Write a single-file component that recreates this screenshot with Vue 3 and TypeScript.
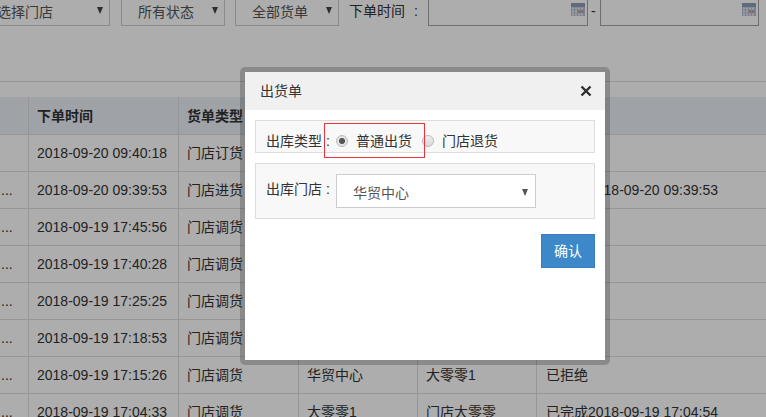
<script setup lang="ts">
interface Row {
  dots: boolean
  time: string
  type: string
  from: string
  to: string
  status: string
}

const rows: Row[] = [
  { dots: false, time: '2018-09-20 09:40:18', type: '门店订货', from: '', to: '', status: '' },
  { dots: true, time: '2018-09-20 09:39:53', type: '门店进货', from: '', to: '', status: '已完成2018-09-20 09:39:53' },
  { dots: true, time: '2018-09-19 17:45:56', type: '门店调货', from: '', to: '', status: '' },
  { dots: true, time: '2018-09-19 17:40:28', type: '门店调货', from: '', to: '', status: '' },
  { dots: true, time: '2018-09-19 17:25:25', type: '门店调货', from: '', to: '', status: '' },
  { dots: true, time: '2018-09-19 17:18:53', type: '门店调货', from: '', to: '', status: '' },
  { dots: true, time: '2018-09-19 17:15:26', type: '门店调货', from: '华贸中心', to: '大零零1', status: '已拒绝' },
  { dots: true, time: '2018-09-19 17:04:33', type: '门店调货', from: '大零零1', to: '门店大零零', status: '已完成2018-09-19 17:04:54' }
]

const calendarCells: Array<[number, number]> = []
for (const y of [5, 8, 11]) {
  for (const x of [2, 5, 8, 11]) {
    calendarCells.push([x, y])
  }
}
</script>

<template>
  <div class="page">
    <div class="toolbar">
      <div class="select first">选择门店<i class="caret"></i></div>
      <div class="select">所有状态<i class="caret"></i></div>
      <div class="select">全部货单<i class="caret"></i></div>
      <span class="time-label">下单时间<span class="colon">:</span></span>
      <div class="date">
        <svg width="14" height="13" viewBox="0 0 14 13">
          <rect width="14" height="13" fill="#b4bfd2" />
          <rect width="14" height="4" fill="#8e9db8" />
          <rect
            v-for="(c, i) in calendarCells"
            :key="i"
            :x="c[0] - 1"
            :y="c[1] - 0.5"
            width="2"
            height="2"
            :fill="i === 6 || i === 7 ? '#e08a68' : '#e6eaf2'"
          />
        </svg>
      </div>
      <span class="dash">-</span>
      <div class="date second">
        <svg width="14" height="13" viewBox="0 0 14 13">
          <rect width="14" height="13" fill="#b4bfd2" />
          <rect width="14" height="4" fill="#8e9db8" />
          <rect
            v-for="(c, i) in calendarCells"
            :key="i"
            :x="c[0] - 1"
            :y="c[1] - 0.5"
            width="2"
            height="2"
            :fill="i === 6 || i === 7 ? '#e08a68' : '#e6eaf2'"
          />
        </svg>
      </div>
    </div>

    <div class="band"></div>

    <div class="table">
      <div class="tr head">
        <div class="td"></div>
        <div class="td">下单时间</div>
        <div class="td">货单类型</div>
        <div class="td"></div>
        <div class="td"></div>
        <div class="td"></div>
      </div>
      <div v-for="r in rows" :key="r.time" class="tr">
        <div class="td dots">{{ r.dots ? '...' : '' }}</div>
        <div class="td">{{ r.time }}</div>
        <div class="td">{{ r.type }}</div>
        <div class="td">{{ r.from }}</div>
        <div class="td">{{ r.to }}</div>
        <div class="td">{{ r.status }}</div>
      </div>
    </div>

    <div class="overlay">
      <div class="modal">
        <div class="modal-head">
          <span>出货单</span>
          <svg class="close" width="12" height="12" viewBox="0 0 12 12">
            <path d="M1.5 1.5 L10.5 10.5 M10.5 1.5 L1.5 10.5" stroke="#2f2f2f" stroke-width="2.4" fill="none" />
          </svg>
        </div>
        <div class="modal-body">
          <div class="box type-box">
            <span class="field-label">出库类型 :</span>
            <label class="radio">
              <input type="radio" name="kind" checked />
              <span>普通出货</span>
            </label>
            <label class="radio">
              <input type="radio" name="kind" />
              <span>门店退货</span>
            </label>
            <div class="marker"></div>
          </div>
          <div class="box store-box">
            <span class="field-label store-label">出库门店 :</span>
            <div class="modal-select">华贸中心<i class="caret"></i></div>
          </div>
          <div class="actions">
            <button class="confirm" type="button">确认</button>
          </div>
        </div>
      </div>
    </div>
  </div>
</template>

<style>
html,
body {
  margin: 0;
  background: #fff;
}
</style>

<style scoped>
.page {
  position: relative;
  width: 766px;
  height: 417px;
  overflow: hidden;
  background: #fff;
  color: #333;
  font: 14px/20px "Liberation Sans", "Noto Sans CJK SC", sans-serif;
}

.toolbar {
  display: flex;
  height: 34px;
  margin: -8px 0 0 -20px;
}

.select {
  display: flex;
  align-items: center;
  justify-content: space-between;
  box-sizing: border-box;
  width: 104px;
  height: 34px;
  margin-right: 10px;
  padding: 5px 6px 0 16px;
  border: 1px solid #ccc;
  background: #fff;
  color: #555;
}

.select.first {
  width: 130px;
  margin-right: 11px;
}

.caret {
  display: block;
  width: 0;
  height: 0;
  margin-top: -3px;
  border-top: 7px solid #444;
  border-left: 3.5px solid transparent;
  border-right: 3.5px solid transparent;
}

.time-label {
  display: flex;
  width: 79px;
  padding-top: 9px;
  line-height: 20px;
}

.colon {
  margin-left: 9px;
}

.date {
  display: flex;
  align-items: center;
  justify-content: flex-end;
  box-sizing: border-box;
  width: 160px;
  height: 34px;
  padding: 1px 2px 0 0;
  border: 1px solid #a3a3a3;
  background: #fff;
}

.date.second {
  width: 159px;
}

.dash {
  width: 12px;
  padding: 9px 0 0 3px;
  box-sizing: border-box;
}

.band {
  box-sizing: border-box;
  height: 56px;
  border-bottom: 1px solid #ddd;
  margin-bottom: 15px;
}

.tr {
  display: grid;
  grid-template-columns: 29px 150px 120px 119px 119px 229px;
  height: 37px;
  box-sizing: border-box;
  border-bottom: 1px solid #ddd;
}

.tr.head {
  height: 38px;
  background: #ebf1f6;
  font-weight: 700;
}

.td {
  display: flex;
  align-items: center;
  padding-left: 8px;
  border-right: 1px solid #ddd;
  white-space: nowrap;
  overflow: hidden;
}

.td:last-child {
  border-right: 0;
  padding-left: 9px;
}

.td.dots {
  padding-left: 1px;
}

.overlay {
  position: absolute;
  inset: 0;
  padding: 67px 0 0 240px;
  background: rgba(0, 0, 0, 0.32);
}

.modal {
  box-sizing: border-box;
  width: 370px;
  height: 298px;
  border: 5px solid rgba(0, 0, 0, 0.2);
  border-radius: 5px;
  background: #fff;
  background-clip: padding-box;
}

.modal-head {
  display: flex;
  align-items: center;
  justify-content: space-between;
  height: 38px;
  padding: 0 13px 0 15px;
  background: #f0f0f0;
}

.modal-body {
  padding: 10px;
}

.box {
  position: relative;
  display: flex;
  align-items: center;
  box-sizing: border-box;
  border: 1px solid #ddd;
  background: #f8f8f8;
  padding-left: 11px;
}

.type-box {
  height: 33px;
  margin-bottom: 10px;
  padding-top: 8px;
}

.store-box {
  height: 56px;
}

.field-label {
  width: 69px;
  margin-left: -1px;
  margin-right: 1px;
  flex: none;
}

.store-label {
  margin-top: -4px;
}

.radio {
  display: flex;
  align-items: center;
  margin-right: 10px;
}

.radio input {
  appearance: none;
  box-sizing: border-box;
  width: 12px;
  height: 12px;
  margin: 0 8px 0 0;
  border: 1px solid #bbb;
  border-radius: 50%;
  background: linear-gradient(#eee, #d8d8d8);
}

.radio input:checked {
  background: radial-gradient(circle, #555 0 2.6px, #e4e4e4 3.4px);
}

.marker {
  position: absolute;
  left: 68px;
  top: 2px;
  width: 101px;
  height: 35px;
  box-sizing: border-box;
  border: 1px solid #e8353a;
}

.modal-select {
  display: flex;
  align-items: center;
  justify-content: space-between;
  box-sizing: border-box;
  width: 200px;
  height: 34px;
  padding: 3px 7px 0 16px;
  border: 1px solid #ccc;
  background: #fff;
  color: #555;
}

.modal-select .caret {
  margin-top: -1px;
  border-top-color: #555;
}

.actions {
  display: flex;
  justify-content: flex-end;
  margin-top: 15px;
}

.confirm {
  width: 54px;
  height: 34px;
  padding: 0;
  border: 1px solid #3a7fbb;
  background: #3d88c9;
  color: #fff;
  font: inherit;
}
</style>
